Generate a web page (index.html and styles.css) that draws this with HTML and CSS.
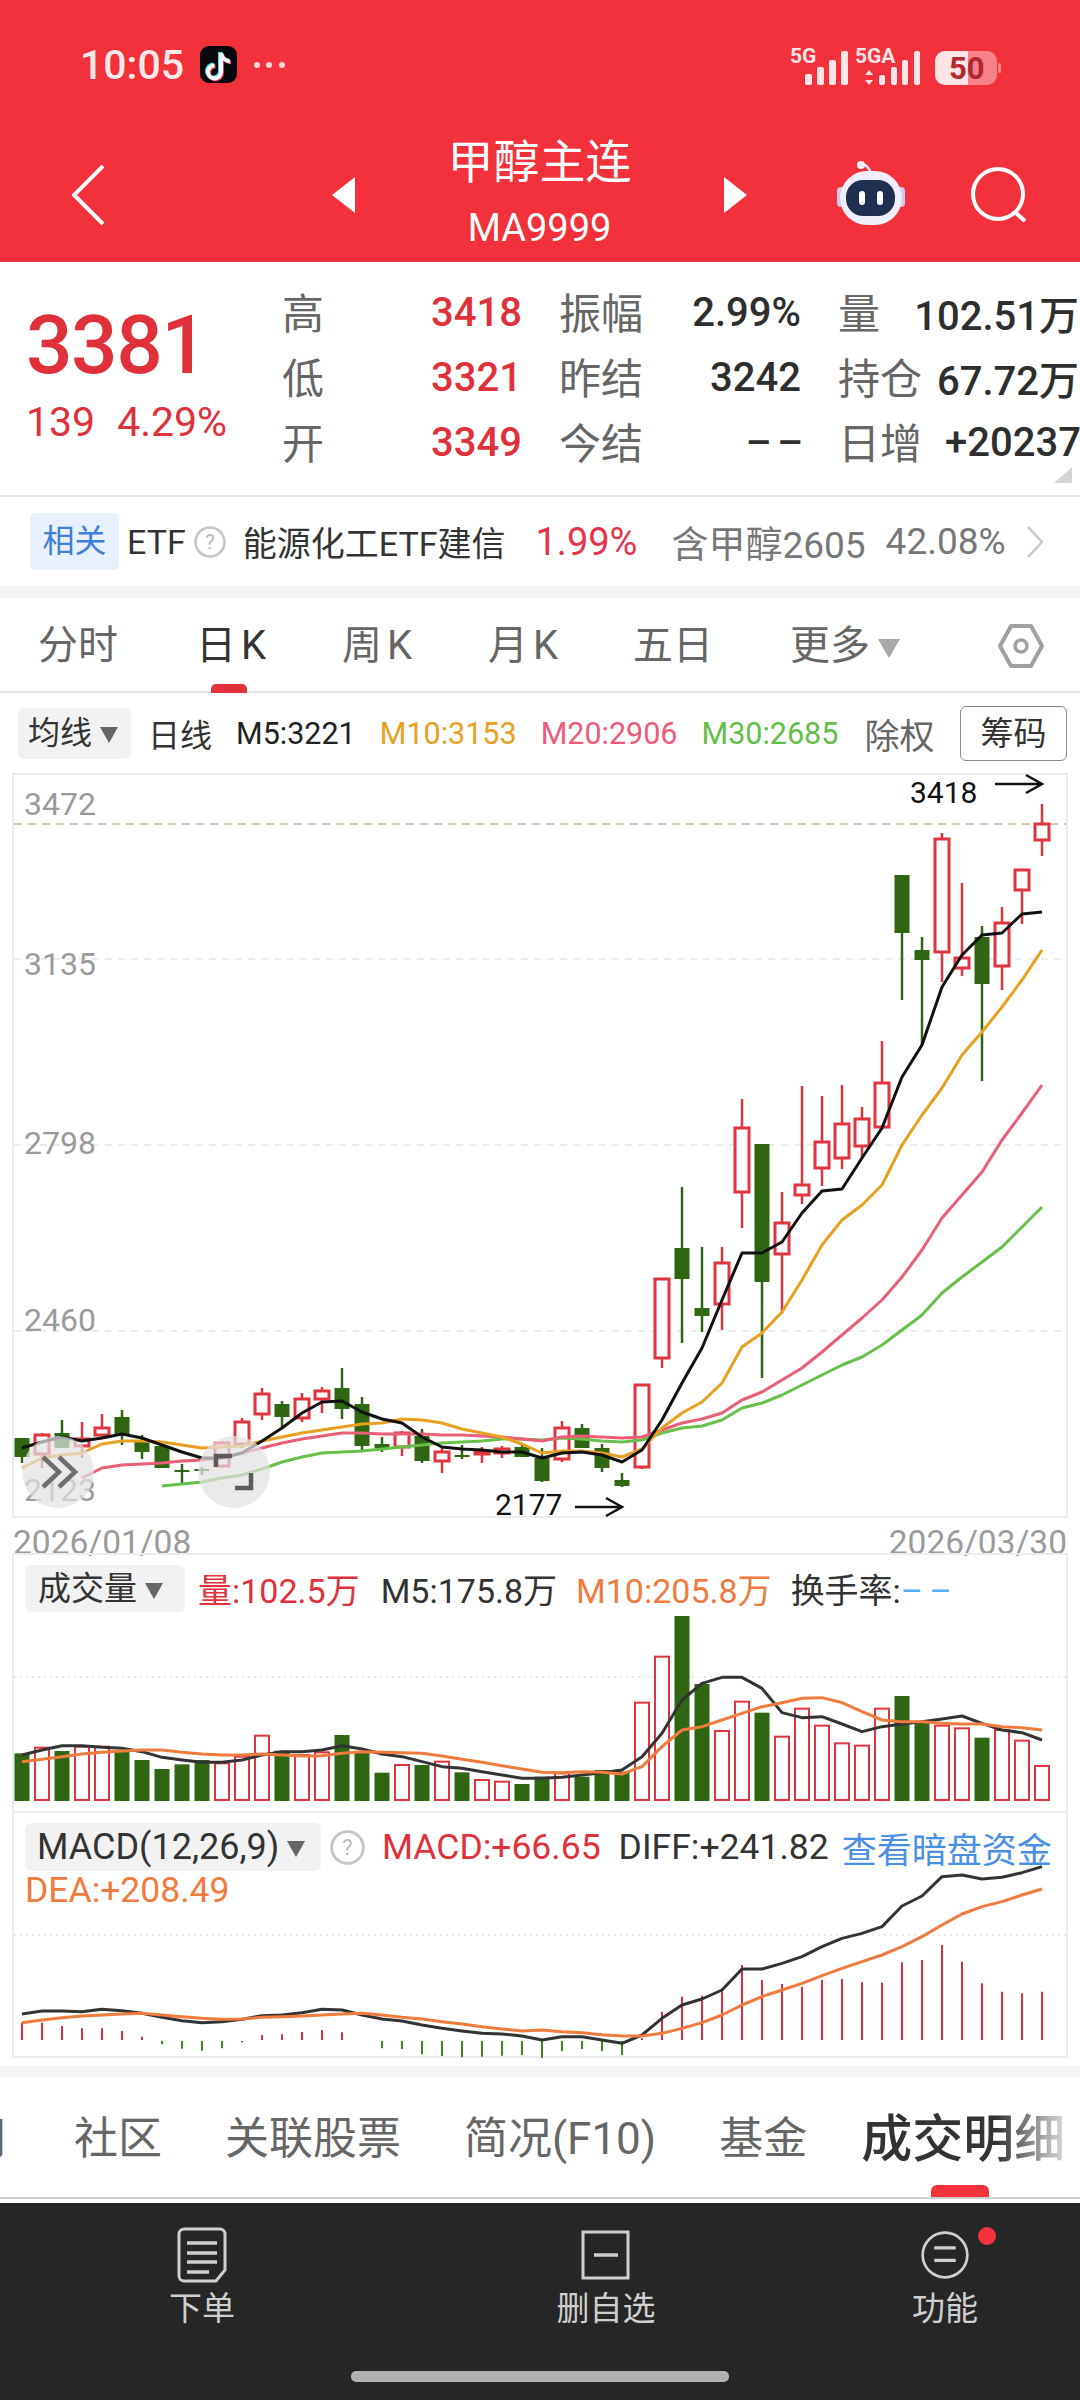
FILE: index.html
```html
<!DOCTYPE html>
<html lang="zh-CN">

<head>
    <meta charset="UTF-8">
    <meta name="viewport" content="width=device-width, initial-scale=1.0">
    <title>甲醇主连</title>
    <link rel="stylesheet" href="styles.css">
</head>

<body>
    <header class="top">
        <div class="status">
            <div class="status-left">
                <span class="clock">10:05</span>
                <svg class="tiktok" viewBox="0 0 37 37">
                    <rect width="37" height="37" rx="9" fill="#08080c" />
                    <g fill="none" stroke-width="4">
                        <path d="M20 6v19a6.5 6.5 0 1 1-6.5-6.5M20 6c.5 4 4 8 9 8.5" stroke="#35e0e8" />
                        <path d="M22 8v19a6.5 6.5 0 1 1-6.5-6.5M22 8c.5 4 4 8 9 8.5" stroke="#f0385c" />
                        <path d="M21 7v19a6.5 6.5 0 1 1-6.5-6.5M21 7c.5 4 4 8 9 8.5" stroke="#fff" />
                    </g>
                </svg>
                <svg class="dots" viewBox="0 0 32 6">
                    <circle cx="3" cy="3" r="3" />
                    <circle cx="15" cy="3" r="3" />
                    <circle cx="28" cy="3" r="3" />
                </svg>
            </div>
            <svg class="status-right" viewBox="0 -4 212 44">
                <g class="sig">
                    <text x="0" y="16" class="sig-text">5G</text>
                    <rect x="15" y="27" width="7" height="11" rx="2" />
                    <rect x="27" y="20" width="7" height="18" rx="2" />
                    <rect x="39" y="13" width="7" height="25" rx="2" />
                    <rect x="51" y="4" width="7" height="34" rx="2" />
                    <text x="65" y="16" class="sig-text">5GA</text>
                    <path d="M79 23l4 5h-8zM79 38l4-5h-8z" />
                    <rect x="89" y="28" width="6" height="10" rx="2" />
                    <rect x="101" y="20" width="6" height="18" rx="2" />
                    <rect x="112" y="13" width="6" height="25" rx="2" />
                    <rect x="124" y="4" width="6" height="34" rx="2" />
                </g>
                <rect x="145" y="4" width="62" height="34" rx="10" fill="#fff" opacity="0.4" />
                <path d="M155 4h23v34h-23a10 10 0 0 1-10-10v-14a10 10 0 0 1 10-10z" fill="#fde4e6" />
                <rect x="208" y="16" width="3" height="10" rx="1.5" fill="#fff" opacity="0.4" />
                <text x="159" y="32" class="batt-text">50</text>
            </svg>
        </div>
        <nav class="nav">
            <svg class="back" viewBox="0 0 33 60">
                <path d="M31 1L2 30l29 29" fill="none" stroke="#fff" stroke-width="4" />
            </svg>
            <svg class="arrow" viewBox="0 0 23 36">
                <path d="M23 0v36L0 18z" fill="#fff" />
            </svg>
            <div class="title">
                <div class="title-name">甲醇主连</div>
                <div class="title-code">MA9999</div>
            </div>
            <svg class="arrow" viewBox="0 0 23 36">
                <path d="M0 0v36l23-18z" fill="#fff" />
            </svg>
            <svg class="robot" viewBox="0 0 68 64">
                <path d="M34 12c-3-7-6-9-9-8" fill="none" stroke="#e9e6fa" stroke-width="2.5" />
                <circle cx="24" cy="4" r="4" fill="#f2eefc" />
                <rect x="0" y="26" width="8" height="20" rx="4" fill="#cfc9f2" />
                <rect x="60" y="26" width="8" height="20" rx="4" fill="#cfc9f2" />
                <rect x="3" y="10" width="62" height="54" rx="27" fill="#f1eefb" />
                <rect x="9" y="19" width="49" height="36" rx="17" fill="#1f2f50" />
                <rect x="22" y="30" width="6" height="14" rx="3" fill="#fff" />
                <rect x="40" y="30" width="6" height="14" rx="3" fill="#fff" />
            </svg>
            <svg class="search" viewBox="0 0 56 56">
                <circle cx="27" cy="27" r="25" fill="none" stroke="#fff" stroke-width="4" />
                <path d="M45 46l9 8" stroke="#fff" stroke-width="4" />
            </svg>
        </nav>
    </header>

    <section class="quote">
        <div class="price">
            <div class="price-big">3381</div>
            <div class="price-sub"><span>139</span><span>4.29%</span></div>
        </div>
        <div class="stats">
            <span class="lb">高</span><span class="val up">3418</span>
            <span class="lb lb-gap">振幅</span><span class="val">2.99%</span>
            <span class="lb lb-gap">量</span><span class="val">102.51万</span>

            <span class="lb">低</span><span class="val up">3321</span>
            <span class="lb lb-gap">昨结</span><span class="val">3242</span>
            <span class="lb lb-gap">持仓</span><span class="val">67.72万</span>

            <span class="lb">开</span><span class="val up">3349</span>
            <span class="lb lb-gap">今结</span><span class="val val-dash">– –</span>
            <span class="lb lb-gap">日增</span><span class="val val-clip">+20237</span>
        </div>
        <span class="corner"></span>
    </section>

    <section class="related">
        <span class="related-tag">相关</span>
        <span class="related-etf">ETF</span>
        <svg class="help" viewBox="0 0 32 32">
            <circle cx="16" cy="16" r="14.5" fill="none" stroke="#c4c4c4" stroke-width="2.5" />
            <text x="16" y="23" text-anchor="middle" class="help-text">?</text>
        </svg>
        <span class="related-name">能源化工ETF建信</span>
        <span class="related-pct">1.99%</span>
        <span class="related-info">含甲醇2605</span>
        <span class="related-info">42.08%</span>
        <svg class="related-more" viewBox="0 0 18 32">
            <path d="M2 1l14 15L2 31" fill="none" stroke="#c8c8c8" stroke-width="2.5" />
        </svg>
    </section>

    <div class="band"></div>

    <nav class="periods">
        <span class="period">分时</span>
        <span class="period period-on">日<b class="k">K</b></span>
        <span class="period">周<b class="k">K</b></span>
        <span class="period">月<b class="k">K</b></span>
        <span class="period">五日</span>
        <span class="period period-more">更多<i class="caret caret-light"></i></span>
        <svg class="hex" viewBox="0 0 46 44">
            <path d="M13 2h20l11 20-11 20H13L2 22z" fill="none" stroke="#a0a0a0" stroke-width="4" stroke-linejoin="round" />
            <circle cx="23" cy="22" r="6" fill="none" stroke="#a0a0a0" stroke-width="3.5" />
        </svg>
    </nav>

    <div class="toolbar">
        <span class="tag tag-ma">均线<i class="caret"></i></span>
        <span class="tb-day">日线</span>
        <span class="tb-ma">M5:3221</span>
        <span class="tb-ma c-m10">M10:3153</span>
        <span class="tb-ma c-m20">M20:2906</span>
        <span class="tb-ma c-m30">M30:2685</span>
        <span class="tb-adj">除权</span>
        <span class="chip">筹码</span>
    </div>

    <section class="panel panel-k">
        <svg id="klineChart" class="chart" viewBox="14 775 1052 741"></svg>
        <div class="float-btn float-a">
            <svg viewBox="0 0 72 72">
                <path d="M21 21l16 15-16 15M37 21l16 15-16 15" fill="none" stroke="#6e6e6e" stroke-width="4.5" />
            </svg>
        </div>
        <div class="float-btn float-b">
            <svg viewBox="0 0 72 72">
                <path d="M18 31V20h16M53 37v15H37" fill="none" stroke="#5c5c5c" stroke-width="4.5" />
            </svg>
        </div>
    </section>

    <div class="dates"><span>2026/01/08</span><span>2026/03/30</span></div>

    <section class="panel panel-vol">
        <svg id="volChart" class="chart" viewBox="14 1555 1052 256"></svg>
        <div class="panel-head head-vol">
            <span class="tag tag-vol">成交量<i class="caret"></i></span>
            <span class="c-red">量:102.5万</span>
            <span class="c-dark vol-m5">M5:175.8万</span>
            <span class="c-orange">M10:205.8万</span>
            <span class="c-dark">换手率:<em class="c-blue">– –</em></span>
        </div>
    </section>

    <section class="panel panel-macd">
        <svg id="macdChart" class="chart" viewBox="14 1813 1052 243"></svg>
        <div class="panel-head head-macd">
            <span class="tag tag-macd">MACD(12,26,9)<i class="caret"></i></span>
            <svg class="help help-macd" viewBox="0 0 32 32">
                <circle cx="16" cy="16" r="14.5" fill="none" stroke="#c4c4c4" stroke-width="2.5" />
                <text x="16" y="23" text-anchor="middle" class="help-text">?</text>
            </svg>
            <span class="c-red">MACD:+66.65</span>
            <span class="c-dark">DIFF:+241.82</span>
            <span class="c-link">查看暗盘资金</span>
        </div>
        <div class="head-dea c-orange">DEA:+208.49</div>
    </section>

    <div class="band band-low"></div>

    <nav class="subtabs">
        <span class="subtab subtab-stub">间</span>
        <span class="subtab">社区</span>
        <span class="subtab">关联股票</span>
        <span class="subtab">简况(F10)</span>
        <span class="subtab">基金</span>
        <span class="subtab subtab-on">成交明细</span>
        <span class="subtabs-fade"></span>
    </nav>

    <footer class="bottom">
        <div class="actions">
            <div class="action">
                <svg viewBox="0 0 50 56">
                    <path d="M7 2h36a5 5 0 0 1 5 5v36l-9 11H7a5 5 0 0 1-5-5V7a5 5 0 0 1 5-5z" fill="none" stroke="#cfcfcf" stroke-width="3" />
                    <path d="M10 16h30M10 26h30M10 35h30M10 45h22" stroke="#cfcfcf" stroke-width="3.5" />
                </svg>
                <span>下单</span>
            </div>
            <div class="action">
                <svg viewBox="0 0 50 56">
                    <rect x="2" y="5" width="45" height="46" fill="none" stroke="#cfcfcf" stroke-width="3" />
                    <path d="M13 28h24" stroke="#cfcfcf" stroke-width="3.5" />
                </svg>
                <span>删自选</span>
            </div>
            <div class="action">
                <svg viewBox="0 0 56 56">
                    <circle cx="28" cy="28" r="25" fill="none" stroke="#cfcfcf" stroke-width="3" />
                    <path d="M16 20h24M16 34h24" stroke="#cfcfcf" stroke-width="3.5" />
                </svg>
                <span>功能</span>
                <i class="badge"></i>
            </div>
        </div>
        <div class="home-bar"></div>
    </footer>

    <script src="chart.js"></script>
</body>

</html>
```

FILE: styles.css
```css
* {
    box-sizing: border-box;
}

body {
    font-family: Roboto, "Noto Sans CJK SC", sans-serif;
    margin: 0;
    padding: 0;
    width: 1080px;
    height: 2400px;
    overflow: hidden;
    background-color: #fff;
    color: #222;
    display: flex;
    flex-direction: column;
}

i,
em {
    font-style: normal;
}

.up {
    color: #e0313b;
}

/* red header */
.top {
    height: 262px;
    background-color: #f2313a;
    color: #fff;
}

.status {
    height: 95px;
    padding: 34px 78px 0 80px;
    display: flex;
    justify-content: space-between;
    align-items: center;
}

.status-left {
    display: flex;
    align-items: center;
}

.clock {
    font-size: 41px;
    font-weight: 500;
    color: #fde8ea;
    width: 120px;
}

.tiktok {
    width: 37px;
    height: 37px;
}

.dots {
    width: 32px;
    height: 6px;
    margin-left: 17px;
    fill: #fdd7da;
}

.status-right {
    width: 212px;
    height: 44px;
}

.sig {
    fill: #fde4e6;
}

.sig-text {
    font-size: 21px;
    font-weight: 700;
}

.batt-text {
    font-size: 31px;
    font-weight: 700;
    fill: #b5262f;
}

.nav {
    height: 167px;
    padding: 33px 0 0 72px;
    display: flex;
    align-items: center;
}

.back {
    width: 33px;
    height: 60px;
    margin-right: 227px;
}

.arrow {
    width: 23px;
    height: 36px;
}

.title {
    width: 369px;
    text-align: center;
}

.title-name {
    font-size: 46px;
    line-height: 66px;
}

.title-code {
    font-size: 38px;
    line-height: 66px;
}

.robot {
    width: 68px;
    height: 64px;
    margin: -4px 0 0 90px;
}

.search {
    width: 56px;
    height: 56px;
    margin-left: 66px;
}

/* quote block */
.quote {
    position: relative;
    height: 235px;
    display: flex;
    border-bottom: 2px solid #e9e9e9;
}

.price {
    width: 282px;
    padding: 41px 0 0 26px;
    color: #e0313b;
}

.price-big {
    font-size: 82px;
    line-height: 84px;
    font-weight: 500;
    letter-spacing: -1.5px;
}

.price-sub {
    margin-top: 12px;
    font-size: 41px;
    line-height: 46px;
    display: flex;
    gap: 22px;
}

.stats {
    width: 798px;
    padding-top: 18px;
    display: grid;
    grid-template-columns: 60px 180px 124px 155px 78px 200px;
    grid-auto-rows: 65px;
    align-items: center;
}

.lb {
    margin-top: -4px;
    font-size: 42px;
    color: #666;
    white-space: nowrap;
}

.lb-gap {
    padding-left: 37px;
}

.val {
    font-size: 40px;
    text-align: right;
    white-space: nowrap;
    font-weight: 500;
    color: #2e2e2e;
}

.val.up {
    color: #e0313b;
}

.val-dash {
    letter-spacing: -2px;
}

.val-clip {
    margin-right: -2px;
}

.corner {
    position: absolute;
    right: 8px;
    top: 205px;
    width: 0;
    height: 0;
    border-left: 18px solid transparent;
    border-bottom: 16px solid #d4d4d4;
}

/* related strip */
.related {
    height: 89px;
    padding-left: 30px;
    display: flex;
    align-items: center;
    font-size: 34px;
    white-space: nowrap;
}

.related-tag {
    width: 89px;
    height: 57px;
    margin-right: 8px;
    background-color: #e8f0fd;
    border-radius: 5px;
    color: #3e7fd8;
    font-size: 32px;
    line-height: 57px;
    text-align: center;
}

.related-etf {
    color: #333;
}

.help {
    width: 32px;
    height: 32px;
    margin: 0 17px 0 8px;
}

.help-text {
    font-size: 20px;
    fill: #b8b8b8;
}

.related-name {
    color: #333;
}

.related-pct {
    margin: 0 34px 0 30px;
    color: #e5334b;
    font-size: 38px;
}

.related-info {
    color: #777;
    margin-right: 20px;
    font-size: 37px;
}

.related-more {
    width: 18px;
    height: 32px;
    margin-left: 0;
}

.band {
    height: 12px;
    background-color: #f4f4f4;
}

/* period tabs */
.periods {
    position: relative;
    height: 95px;
    border-bottom: 2px solid #e4e4e4;
    font-size: 40px;
    color: #666;
}

.period {
    position: absolute;
    top: 20px;
    line-height: 56px;
    white-space: nowrap;
}

.k {
    font-weight: 400;
    margin-left: 5px;
}

.period:nth-child(1) {
    left: 38px;
}

.period:nth-child(2) {
    left: 196px;
}

.period:nth-child(3) {
    left: 342px;
}

.period:nth-child(4) {
    left: 488px;
}

.period:nth-child(5) {
    left: 633px;
}

.period-more {
    left: 790px;
}

.period-on {
    color: #333;
}

.period-on::after {
    content: "";
    position: absolute;
    left: 15px;
    top: 66px;
    width: 36px;
    height: 9px;
    background-color: #e3323c;
    border-radius: 5px 5px 0 0;
}

.hex {
    position: absolute;
    left: 998px;
    top: 26px;
    width: 46px;
    height: 44px;
}

.caret {
    display: inline-block;
    margin-left: 8px;
    vertical-align: middle;
    border-left: 9px solid transparent;
    border-right: 9px solid transparent;
    border-top: 16px solid #666;
}

.caret-light {
    border-top-color: #a8a8a8;
    border-left-width: 11px;
    border-right-width: 11px;
    border-top-width: 19px;
}

/* indicator toolbar */
.toolbar {
    height: 80px;
    padding: 0 13px 0 18px;
    display: flex;
    align-items: center;
    gap: 24px;
    font-size: 30.5px;
    white-space: nowrap;
}

.tag {
    background-color: #f2f2f2;
    border-radius: 6px;
    color: #333;
    font-size: 32px;
    white-space: nowrap;
}

.tag-ma {
    width: 113px;
    height: 51px;
    margin-right: -7px;
    padding-left: 10px;
    line-height: 51px;
}

.tb-day {
    color: #333;
    font-size: 32px;
}

.tb-adj {
    margin-left: 2px;
    font-size: 35px;
    color: #666;
}

.chip {
    width: 107px;
    height: 55px;
    margin-left: auto;
    border: 1.5px solid #8a8a8a;
    border-radius: 6px;
    font-size: 33px;
    line-height: 54px;
    text-align: center;
    color: #333;
}

.c-m10 {
    color: #e8a020;
}

.c-m20 {
    color: #ee5a78;
}

.c-m30 {
    color: #62c048;
}

/* chart panels */
.panel {
    position: relative;
    margin: 0 12px;
    border: 2px solid #ececec;
}

.chart {
    display: block;
    width: 100%;
    height: 100%;
    overflow: visible;
}

.panel-k {
    height: 745px;
}

.panel-vol {
    height: 258px;
    border-bottom: 0;
}

.panel-macd {
    height: 247px;
}

.dates {
    height: 35px;
    padding: 0 13px;
    display: flex;
    justify-content: space-between;
    font-size: 33.5px;
    line-height: 50px;
    color: #9a9a9a;
}

.axis-text {
    font-size: 32px;
    fill: #9a9a9a;
}

.mark-text {
    font-size: 30px;
    fill: #111;
}

.float-btn {
    position: absolute;
    top: 661px;
    width: 72px;
    height: 72px;
    border-radius: 50%;
    background-color: rgba(226, 226, 226, 0.72);
}

.float-a {
    left: 8px;
}

.float-b {
    left: 184px;
}

.panel-head {
    position: absolute;
    left: 11px;
    display: flex;
    align-items: center;
    font-size: 34px;
    white-space: nowrap;
}

.head-vol {
    top: 10px;
    height: 47px;
    gap: 19px;
}

.vol-m5 {
    margin-left: 2px;
}

.tag-vol {
    width: 160px;
    height: 47px;
    margin-right: -6px;
    padding-left: 13px;
    line-height: 47px;
    font-size: 33px;
}

.head-macd {
    top: 10px;
    height: 48px;
    gap: 18px;
    font-size: 35.5px;
}

.tag-macd {
    width: 296px;
    height: 48px;
    margin-right: -9px;
    padding-left: 12px;
    line-height: 48px;
    font-size: 36px;
}

.help-macd {
    width: 35px;
    height: 35px;
    margin: 0 -1px 0 0;
}

.head-dea {
    position: absolute;
    left: 11px;
    top: 55px;
    font-size: 35.5px;
    line-height: 44px;
}

.c-red {
    color: #e0313b;
}

.c-dark {
    color: #333;
}

.c-orange {
    color: #ef7b3e;
}

.c-blue {
    color: #55aef0;
    letter-spacing: -1px;
}

.c-link {
    margin-left: -5px;
    color: #4a90e2;
    font-size: 35px;
}

.band-low {
    margin-top: 8px;
    height: 11px;
}

/* lower tabs */
.subtabs {
    position: relative;
    height: 122px;
    padding-bottom: 5px;
    display: flex;
    align-items: center;
    gap: 63px;
    overflow: hidden;
    background-color: #fff;
    border-bottom: 2px solid #cdcdcd;
    font-size: 44px;
    color: #666;
    white-space: nowrap;
}

.subtab-stub {
    margin: 0 5px 0 -38px;
}

.subtab-on {
    margin-left: -9px;
    color: #333;
    font-size: 51px;
    font-weight: 500;
}

.subtab-on::after {
    content: "";
    position: absolute;
    left: 931px;
    top: 108px;
    width: 58px;
    height: 12px;
    background-color: #f3323c;
    border-radius: 6px 6px 0 0;
}

.subtabs-fade {
    position: absolute;
    right: 8px;
    top: 0;
    width: 76px;
    height: 100px;
    background: linear-gradient(to right, rgba(255, 255, 255, 0), rgba(255, 255, 255, 0.9));
}

/* bottom action bar */
.bottom {
    margin-top: 4px;
    flex: 1;
    background-color: #262626;
    padding-top: 24px;
}

.actions {
    padding-left: 152px;
    display: flex;
    gap: 304px;
}

.action:last-child {
    margin-left: -65px;
}

.action {
    position: relative;
    width: 100px;
    display: flex;
    flex-direction: column;
    align-items: center;
    gap: 7px;
    color: #cfcfcf;
    font-size: 33px;
    line-height: 38px;
}

.action svg {
    width: 50px;
    height: 56px;
}

.badge {
    position: absolute;
    left: 83px;
    top: 0;
    width: 18px;
    height: 18px;
    border-radius: 50%;
    background-color: #f3323c;
}

.home-bar {
    width: 378px;
    height: 11px;
    margin: 43px auto 0;
    border-radius: 5px;
    background-color: #b0b0b0;
}
```

FILE: chart.js
```javascript
// All chart data is in page pixels, x = 22 + 20 * i for the 52 trading days
var RED = '#e0343e';
var GREEN = '#2f6611';
var NS = 'http://www.w3.org/2000/svg';

function xAt(i) {
    return 22 + 20 * i;
}

function add(svg, name, attrs, text) {
    var el = document.createElementNS(NS, name);
    for (var k in attrs) {
        el.setAttribute(k, attrs[k]);
    }
    if (text) {
        el.textContent = text;
    }
    svg.appendChild(el);
    return el;
}

function hLine(svg, y, color, dash) {
    add(svg, 'line', { x1: 14, x2: 1066, y1: y, y2: y, stroke: color, 'stroke-width': 1.5, 'stroke-dasharray': dash });
}

// pts is [startIndex, y, y, y ...]
function maLine(svg, pts, color, width) {
    var out = [];
    for (var i = 1; i < pts.length; i++) {
        out.push(xAt(pts[0] + i - 1) + ',' + pts[i]);
    }
    add(svg, 'polyline', { points: out.join(' '), fill: 'none', stroke: color, 'stroke-width': width, 'stroke-linejoin': 'round' });
}

// [up, high, top, bottom, low]
var candles = [
    [0, 1438, 1438, 1457, 1463], [1, 1433, 1434, 1455, 1468], [0, 1420, 1433, 1448, 1448], [1, 1422, 1438, 1447, 1458],
    [1, 1414, 1427, 1436, 1438], [0, 1410, 1417, 1435, 1445], [0, 1435, 1440, 1452, 1459], [0, 1445, 1446, 1468, 1468],
    [0, 1464, 1470, 1472, 1483], [0, 1467, 1469, 1471, 1475], [1, 1441, 1442, 1467, 1468], [1, 1418, 1421, 1445, 1448],
    [1, 1388, 1393, 1415, 1420], [0, 1401, 1404, 1417, 1427], [1, 1393, 1398, 1419, 1422], [1, 1387, 1390, 1400, 1413],
    [0, 1368, 1388, 1409, 1419], [0, 1397, 1404, 1446, 1450], [0, 1437, 1444, 1448, 1452], [1, 1431, 1432, 1448, 1456],
    [0, 1429, 1436, 1461, 1463], [1, 1447, 1451, 1462, 1473], [0, 1445, 1455, 1457, 1459], [1, 1447, 1451, 1455, 1463],
    [1, 1446, 1448, 1454, 1458], [0, 1443, 1447, 1457, 1457], [0, 1448, 1458, 1481, 1482], [1, 1421, 1427, 1460, 1462],
    [0, 1424, 1428, 1448, 1448], [0, 1444, 1448, 1468, 1472], [0, 1473, 1480, 1486, 1487], [1, 1384, 1384, 1468, 1469],
    [1, 1278, 1278, 1359, 1368], [0, 1187, 1248, 1279, 1343], [0, 1247, 1308, 1316, 1332], [1, 1247, 1262, 1305, 1330],
    [1, 1099, 1127, 1193, 1228], [0, 1144, 1144, 1282, 1378], [1, 1192, 1222, 1255, 1314], [1, 1086, 1184, 1196, 1204],
    [1, 1096, 1141, 1169, 1186], [1, 1085, 1123, 1159, 1169], [1, 1107, 1118, 1147, 1158], [1, 1041, 1082, 1128, 1130],
    [0, 875, 875, 933, 1000], [0, 937, 950, 960, 1045], [1, 833, 838, 953, 982], [1, 883, 957, 969, 976],
    [0, 926, 937, 984, 1081], [1, 907, 922, 967, 990], [1, 869, 869, 891, 924], [1, 804, 823, 841, 856]
];

var m5 = [0, 1448, 1442, 1437, 1441, 1438, 1434, 1438, 1445, 1452, 1458, 1458, 1453, 1441, 1428, 1413, 1402, 1401, 1412, 1419, 1423,
    1437, 1447, 1449, 1450, 1452, 1452, 1458, 1453, 1452, 1455, 1462, 1450, 1420, 1383, 1348, 1300, 1253, 1253, 1242, 1213, 1191, 1189,
    1158, 1128, 1077, 1045, 987, 955, 935, 933, 914, 912];
var m10 = [0, 1468, 1458, 1455, 1453, 1444, 1441, 1441, 1442, 1445, 1448, 1447, 1446, 1441, 1437, 1433, 1430, 1427, 1424, 1423, 1419,
    1420, 1423, 1429, 1433, 1437, 1444, 1453, 1451, 1451, 1453, 1457, 1449, 1428, 1413, 1402, 1383, 1347, 1333, 1312, 1280, 1245, 1220,
    1205, 1185, 1145, 1115, 1088, 1055, 1032, 1007, 980, 950];
var m20 = [3, 1478, 1468, 1465, 1464, 1463, 1461, 1460, 1458, 1453, 1448, 1443, 1439, 1436, 1433, 1433, 1434, 1434, 1434, 1435, 1435,
    1436, 1437, 1439, 1441, 1437, 1436, 1437, 1438, 1437, 1430, 1423, 1419, 1413, 1400, 1392, 1380, 1368, 1352, 1335, 1318, 1300, 1277,
    1250, 1218, 1195, 1172, 1140, 1113, 1085];
var m30 = [7, 1486, 1484, 1482, 1478, 1475, 1469, 1462, 1457, 1453, 1452, 1451, 1449, 1447, 1445, 1443, 1442, 1441, 1439, 1439, 1440,
    1438, 1439, 1441, 1442, 1440, 1433, 1428, 1426, 1420, 1408, 1403, 1395, 1385, 1375, 1365, 1357, 1345, 1330, 1315, 1293, 1277, 1262,
    1247, 1227, 1207];

// volume and macd were read off a 3x crop, so they go through a y scale
var volBars = [[0, 610], [1, 593], [0, 603], [1, 590], [1, 590], [0, 600], [0, 630], [0, 657], [0, 643], [0, 630], [1, 640], [1, 620], [1, 557],
    [0, 602], [1, 615], [1, 607], [0, 555], [0, 605], [0, 668], [1, 645], [0, 645], [1, 635], [0, 667], [1, 690], [1, 695], [0, 702], [0, 680],
    [1, 670], [0, 680], [0, 660], [0, 665], [1, 458], [1, 320], [0, 198], [0, 402], [1, 543], [1, 455], [0, 488], [1, 560], [1, 476], [1, 527],
    [1, 580], [1, 587], [1, 476], [0, 438], [0, 518], [1, 527], [1, 535], [0, 563], [1, 540], [1, 572], [1, 648]];
var volM5 = [615, 600, 587, 587, 592, 595, 605, 622, 630, 637, 637, 630, 615, 605, 605, 600, 587, 597, 612, 620, 635, 650, 655, 665, 675, 685,
    685, 682, 675, 668, 660, 620, 550, 450, 400, 382, 382, 415, 488, 503, 500, 522, 545, 530, 522, 515, 507, 498, 520, 540, 548, 570];
var volM10 = [635, 628, 620, 612, 607, 603, 600, 600, 607, 612, 615, 615, 612, 615, 618, 617, 610, 605, 607, 608, 610, 618, 628, 637, 647, 657,
    667, 668, 665, 667, 672, 650, 590, 540, 530, 510, 490, 470, 458, 445, 443, 458, 485, 510, 515, 515, 520, 522, 522, 530, 533, 540];

var macdTops = [668, 668, 678, 685, 685, 693, 710, 733, 746, 752, 745, 727, 705, 703, 696, 690, 697, 723, 745, 747, 763, 768, 772, 770, 767, 765,
    773, 753, 747, 753, 765, 715, 636, 590, 587, 570, 495, 540, 552, 560, 540, 537, 547, 548, 487, 480, 435, 485, 550, 575, 580, 575];
var diff = [642, 633, 633, 635, 628, 632, 640, 652, 662, 668, 665, 658, 647, 645, 638, 628, 630, 645, 657, 663, 675, 685, 693, 700, 702, 708,
    720, 710, 710, 720, 730, 705, 655, 615, 597, 570, 507, 507, 490, 470, 440, 415, 400, 380, 318, 288, 230, 225, 237, 232, 218, 200];
var dea = [668, 660, 653, 648, 645, 642, 640, 645, 650, 655, 658, 657, 652, 650, 648, 645, 642, 640, 645, 652, 657, 665, 672, 680, 687, 693,
    690, 695, 698, 704, 708, 708, 700, 685, 668, 645, 615, 590, 570, 550, 527, 505, 485, 465, 440, 410, 375, 342, 320, 305, 285, 267];

function scaled(list, origin) {
    var pts = [0];
    list.forEach(function (v) {
        pts.push(origin + v / 3);
    });
    return pts;
}

function drawKline() {
    var svg = document.getElementById('klineChart');
    hLine(svg, 959, '#e6e6e6', '7 6');
    hLine(svg, 1145, '#e6e6e6', '7 6');
    hLine(svg, 1331, '#e6e6e6', '7 6');
    hLine(svg, 824, '#c9b596', '8 6');

    [['3472', 815], ['3135', 975], ['2798', 1154], ['2460', 1331], ['2123', 1501]].forEach(function (a) {
        add(svg, 'text', { x: 24, y: a[1], 'class': 'axis-text' }, a[0]);
    });

    candles.forEach(function (c, i) {
        var x = xAt(i);
        var color = c[0] ? RED : GREEN;
        add(svg, 'line', { x1: x, x2: x, y1: c[1], y2: c[2], stroke: color, 'stroke-width': 2.5 });
        add(svg, 'line', { x1: x, x2: x, y1: c[3], y2: c[4], stroke: color, 'stroke-width': 2.5 });
        if (c[0]) {
            add(svg, 'rect', { x: x - 7, y: c[2] + 1, width: 14, height: Math.max(c[3] - c[2] - 2, 1), fill: '#fff', stroke: color, 'stroke-width': 3 });
        } else {
            add(svg, 'rect', { x: x - 7.5, y: c[2], width: 15, height: c[3] - c[2], fill: color });
        }
    });

    maLine(svg, m30, '#69bf4b', 3);
    maLine(svg, m20, '#ea5f78', 3);
    maLine(svg, m10, '#e8a020', 3);
    maLine(svg, m5, '#111', 3);

    add(svg, 'text', { x: 910, y: 803, 'class': 'mark-text' }, '3418');
    add(svg, 'path', { d: 'M995 784h47m-16-9l16 9-16 9', fill: 'none', stroke: '#111', 'stroke-width': 2.5 });
    add(svg, 'text', { x: 495, y: 1515, 'class': 'mark-text' }, '2177');
    add(svg, 'path', { d: 'M575 1507h47m-16-9l16 9-16 9', fill: 'none', stroke: '#111', 'stroke-width': 2.5 });
}

function drawVolume() {
    var svg = document.getElementById('volChart');
    var base = 1801;
    hLine(svg, 1677, '#e2e2e2', '2 4');
    volBars.forEach(function (b, i) {
        var top = 1550 + b[1] / 3;
        if (b[0]) {
            add(svg, 'rect', { x: xAt(i) - 7, y: top, width: 14, height: base - top - 1, fill: '#fff', stroke: RED, 'stroke-width': 2 });
        } else {
            add(svg, 'rect', { x: xAt(i) - 7.5, y: top, width: 15, height: base - top, fill: GREEN });
        }
    });
    maLine(svg, scaled(volM5, 1550), '#333', 3);
    maLine(svg, scaled(volM10, 1550), '#ef7b3e', 3);
}

function drawMacd() {
    var svg = document.getElementById('macdChart');
    var base = 2040;
    hLine(svg, 1935, '#e2e2e2', '2 4');
    macdTops.forEach(function (v, i) {
        var top = 1800 + v / 3;
        var down = top > base;
        add(svg, 'line', { x1: xAt(i), x2: xAt(i), y1: down ? base + 1 : top, y2: down ? top : base, stroke: down ? '#3a8a1e' : '#d8323c', 'stroke-width': 2 });
    });
    maLine(svg, scaled(diff, 1800), '#333', 3);
    maLine(svg, scaled(dea, 1800), '#ef7b3e', 3);
}

drawKline();
drawVolume();
drawMacd();
```
